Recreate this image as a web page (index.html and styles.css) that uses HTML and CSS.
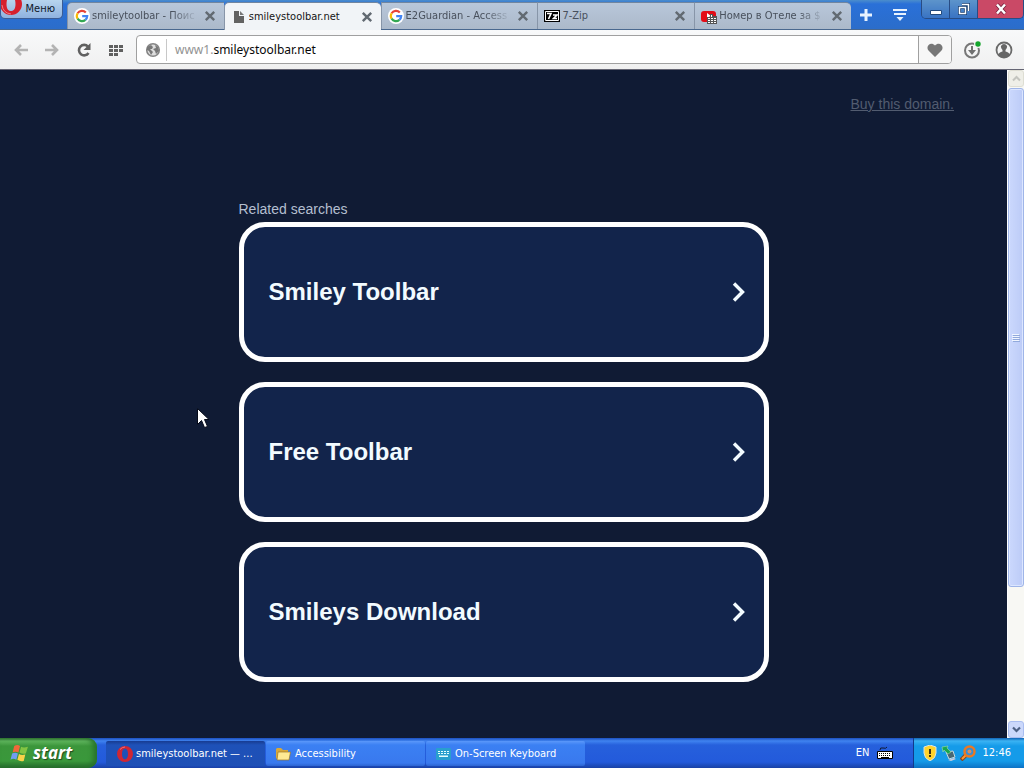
FILE: index.html
```html
<!DOCTYPE html>
<html lang="ru">
<head>
<meta charset="utf-8">
<meta name="viewport" content="width=device-width, initial-scale=1">
<title>smileystoolbar.net</title>
<link rel="stylesheet" href="styles.css">
</head>
<body>
<svg class="symbols" aria-hidden="true">
  <symbol id="google" viewBox="0 0 16 16"><circle cx="8" cy="8" r="8" fill="#fff"/><g fill="none" stroke-width="2.2"><path d="M11.8 4.4A5.2 5.2 0 0 0 3.6 5.3" stroke="#e84335"/><path d="M3.6 5.3a5.2 5.2 0 0 0 0 5.4" stroke="#f9bb04"/><path d="M3.6 10.7a5.2 5.2 0 0 0 7.8 1.2" stroke="#33a852"/><path d="M11.4 11.9a5.2 5.2 0 0 0 1.8-3.7H8.2" stroke="#4284f3"/></g></symbol>
  <symbol id="close" viewBox="0 0 10 10"><path d="M1.5 1.5l7 7M8.5 1.5l-7 7" stroke="#626a72" stroke-width="2"/></symbol>
  <symbol id="opera" viewBox="0 0 16 16"><path fill-rule="evenodd" fill="#cf2634" d="M8 0a8 8 0 1 0 0 16A8 8 0 0 0 8 0zm0 2.6c1.9 0 3 2.3 3 5.4s-1.100 5.400-3 5.400S5 11.100 5 8s1.100-5.400 3-5.400z"/><path d="M3 3.500Q5 1 8 1" fill="none" stroke="#ee7078"/></symbol>
  <symbol id="chevron" viewBox="0 0 14 20"><path d="M2 1.500L10.500 10 2 18.500" fill="none" stroke="#f2fbff" stroke-width="3.400"/></symbol>
</svg>

<header class="browser">
  <div class="tabstrip">
    <button class="menu"><svg class="menu-logo" viewBox="0 0 22 15"><path fill-rule="evenodd" fill="#d6202d" d="M10-7a11 11 0 1 0 0 22 11 11 0 0 0 0-22zm0 3c3 0 4.500 3.500 4.500 8s-1.500 7-4.500 7-4.500-2.500-4.500-7S7-4 10-4z"/><path d="M1 5q1 8 9 9" fill="none" stroke="#f08088"/></svg>Меню</button>
    <nav class="tabs">
      <div class="tab first"><svg class="fav"><use href="#google"/></svg><button class="tab-title fade">smileytoolbar - Поис</button><button class="close" aria-label="Закрыть"><svg><use href="#close"/></svg></button></div>
      <div class="tab active"><svg class="page-icon" viewBox="0 0 10 12"><path d="M0 0h5v5h5v7H0z" fill="#626262"/><path d="M6 0l4 4H6z" fill="#777"/></svg><button class="tab-title">smileystoolbar.net</button><button class="close" aria-label="Закрыть"><svg><use href="#close"/></svg></button></div>
      <div class="tab"><svg class="fav"><use href="#google"/></svg><button class="tab-title fade">E2Guardian - Access</button><button class="close" aria-label="Закрыть"><svg><use href="#close"/></svg></button></div>
      <div class="tab"><svg class="fav" viewBox="0 0 16 16"><path d="M0 2h16v12H0z"/><path d="M1.500 3.500h13v9h-13z" fill="#000" stroke="#fff"/><path d="M3 5.500h4L4.500 11M9 7h4l-3.500 3.500H13" fill="none" stroke="#fff" stroke-width="1.600"/></svg><button class="tab-title">7-Zip</button><button class="close" aria-label="Закрыть"><svg><use href="#close"/></svg></button></div>
      <div class="tab"><svg class="fav" viewBox="0 0 16 16"><rect y="3" width="15" height="11" rx="3" fill="#e40b16"/><path d="M6 5l4 3-4 2z" fill="#fff"/><path d="M6 9h3V6h3v2h4v8H6z" fill="#555"/><path d="M7 10h2v1H7zm0 2h2v1H7zm0 2h2v1H7zm3-7h1v2h-1zm0 3h2v1h-2zm0 2h2v1h-2zm0 2h2v1h-2zm3-4h2v1h-2zm0 2h2v1h-2zm0 2h2v1h-2z" fill="#fff"/></svg><button class="tab-title fade">Номер в Отеле за $</button><button class="close" aria-label="Закрыть"><svg><use href="#close"/></svg></button></div>
    </nav>
    <button class="strip-icon" aria-label="Новая вкладка"><svg viewBox="0 0 12 12"><path d="M6 0v12M0 6h12" stroke="#e8f3ff" stroke-width="3"/></svg></button>
    <button class="strip-icon wide" aria-label="Вкладки"><svg viewBox="0 0 14 12"><path d="M0 1h14M1 5h12" stroke="#e8f3ff" stroke-width="2"/><path d="M3.500 8h7L7 12z" fill="#e8f3ff"/></svg></button>
    <div class="window-controls">
      <button aria-label="Свернуть"><svg viewBox="0 0 12 12"><path d="M.5 7.500h11v4H.5z" fill="#fff" stroke="#234a7c"/></svg></button>
      <button aria-label="Развернуть"><svg viewBox="0 0 12 12"><path d="M4 1.500h6.500V8M1.500 4.500h6v6h-6z" fill="none" stroke="#163c70" stroke-width="3"/><path d="M4 1.500h6.500V8M1.500 4.500h6v6h-6z" fill="none" stroke="#fff" stroke-width="1.500"/></svg></button>
      <button class="window-close" aria-label="Закрыть окно"><svg viewBox="0 0 12 12"><path d="M2 1.500l8 9M10 1.500l-8 9" stroke="#70203b" stroke-width="4"/><path d="M2 1.500l8 9M10 1.500l-8 9" stroke="#fff" stroke-width="2.500"/></svg></button>
    </div>
  </div>
  <div class="toolbar">
    <div class="nav-buttons">
      <button aria-label="Назад"><svg viewBox="0 0 16 16"><path d="M15 8H3M8 3L3 8l5 5" fill="none" stroke="#b3b3b3" stroke-width="2.600"/></svg></button>
      <button aria-label="Вперёд"><svg viewBox="0 0 16 16"><path d="M1 8h12M8 3l5 5-5 5" fill="none" stroke="#b3b3b3" stroke-width="2.600"/></svg></button>
      <button aria-label="Обновить"><svg viewBox="0 0 16 16"><path d="M12.500 11A5.200 5.200 0 1 1 12 4.600" fill="none" stroke="#606060" stroke-width="2.600"/><path d="M14.500 1v7h-7z" fill="#606060"/></svg></button>
      <button aria-label="Экспресс-панель"><svg viewBox="0 0 16 16"><path d="M1 3h4v3H1zm5 0h4v3H6zm5 0h4v3h-4zM1 7h4v3H1zm5 0h4v3H6zm5 0h4v3h-4zM1 11h4v3H1zm5 0h4v3H6z" fill="#606060"/></svg></button>
    </div>
    <div class="address">
      <svg class="globe" viewBox="0 0 16 16"><circle cx="8" cy="8" r="6.300" fill="#ddd" stroke="#858585" stroke-width="1.600"/><path d="M2 5l4-2 2 2-1 2H5l3 3-2 3-2-4-2-1zM10 3l3 2 1 4-3 3-1-3-2-2 3-1z" fill="#777"/></svg>
      <div class="url"><input aria-label="Адрес" value="www1.smileystoolbar.net"><div class="url-display" aria-hidden="true"><span>www1.</span>smileystoolbar.net</div></div>
      <button class="heart" aria-label="Добавить в закладки"><svg viewBox="0 0 16 16"><path d="M8 15L1.500 8.500C-2 4 4-1 8 3.500 12-1 18 4 14.500 8.500z" fill="#777"/></svg></button>
    </div>
    <button class="tool" aria-label="Загрузки"><svg viewBox="0 0 18 18"><circle cx="9" cy="9.500" r="7" fill="none" stroke="#777" stroke-width="2"/><path d="M8 5h2v4h3l-4 5-4-5h3z" fill="#707070"/><circle cx="15" cy="3" r="4" fill="#f3f3f3"/><circle cx="15" cy="3" r="2.700" fill="#13a52c"/></svg></button>
    <button class="tool" aria-label="Профиль"><svg viewBox="0 0 18 18"><circle cx="9" cy="9" r="7.500" fill="none" stroke="#6a6a6a" stroke-width="1.800"/><path d="M3 14q1-3 4.500-3.500V9Q5.500 7 6 5q1-2 3-2t3 2q.5 2-1.500 4v1.500Q14 11 15 14q-6 6-12 0z" fill="#666"/></svg></button>
  </div>
</header>

<div class="viewport">
  <main class="page">
    <a class="buy" href="#">Buy this domain.</a>
    <section class="results">
      <h1>Related searches</h1>
      <a class="card" href="#">Smiley Toolbar<svg><use href="#chevron"/></svg></a>
      <a class="card" href="#">Free Toolbar<svg><use href="#chevron"/></svg></a>
      <a class="card" href="#">Smileys Download<svg><use href="#chevron"/></svg></a>
    </section>
  </main>
  <div class="scrollbar">
    <button class="scroll-button disabled" aria-label="Вверх"><svg viewBox="0 0 9 9"><path d="M1 6.500L4.500 3 8 6.500" fill="none" stroke="#c4c5bf" stroke-width="2"/></svg></button>
    <div class="track"><div class="thumb"><svg viewBox="0 0 8 8"><path d="M0 .5h7M0 2.500h7M0 4.500h7M0 6.500h7" stroke="#f0f5ff"/><path d="M1 1.500h7M1 3.500h7M1 5.500h7M1 7.500h7" stroke="#91a9dc"/></svg></div></div>
    <button class="scroll-button" aria-label="Вниз"><svg viewBox="0 0 9 9"><path d="M1 2.500L4.500 6 8 2.500" fill="none" stroke="#4d6185" stroke-width="2.200"/></svg></button>
  </div>
</div>

<footer class="taskbar">
  <button class="start"><svg viewBox="0 0 18 18"><path d="M4 2q3-2 5.500 0L8 8Q5 6.500 2.500 8z" fill="#f0683a"/><path d="M10.500 2.500Q13 4 17 2.500L15 9q-3 1-6-1z" fill="#83c443"/><path d="M2 9q3-1.500 5.500 0L6 15q-3-2-5.500 0z" fill="#709df2"/><path d="M8.500 9.500Q11 11 14.500 10L13 16q-3 1-6-1z" fill="#fad249"/></svg>start</button>
  <nav class="tasks">
    <button class="task current"><svg><use href="#opera"/></svg>smileystoolbar.net — ...</button>
    <button class="task"><svg viewBox="0 0 16 16"><path d="M1 3l1-1h4l2 2h5v9H2L1 12z" fill="#d7a83a"/><path d="M3 6h12.500L14 14H2z" fill="#ffe993" stroke="#9b7627" stroke-width=".7"/></svg>Accessibility</button>
    <button class="task"><svg viewBox="0 0 16 16"><rect x="1" y="2" width="15" height="12" rx="1" fill="#299fce"/><path d="M3 5h2v1H3zm3 0h2v1H6zm3 0h2v1H9zm3 0h2v1h-2zM3 7h2v1H3zm3 0h2v1H6zm3 0h2v1H9zm3 0h2v1h-2zM4 9.500h9v1.500H4z" fill="#e5ffff"/></svg>On-Screen Keyboard</button>
  </nav>
  <div class="language">EN<svg viewBox="0 0 16 16"><path d="M3 5q0-3 3-2t4-1" fill="none" stroke="#101a35"/><path d="M.5 6.500h15v7H.5z" fill="#fff" stroke="#000"/><path d="M2 8.500h12M2 10.500h12" stroke="#000" stroke-dasharray="1 1"/><path d="M4 12.500h8" stroke="#000"/></svg></div>
  <div class="tray">
    <svg viewBox="0 0 16 16"><path d="M8 0l6 2v6q0 5-6 8-6-3-6-8V2z" fill="#ffd42b" stroke="#d9e3e6"/><path d="M7 4h2v5H7zm0 6h2v2H7z" fill="#3d3213"/></svg>
    <svg viewBox="0 0 16 16"><path d="M5 7l7-1 2 6-6 2z" fill="#476875" stroke="#c4d9df"/><path d="M7 15l6-2 2 1-5 2z" fill="#ccd"/><path d="M1 2l6-1-1 2 4 4-3 2-4-4-1 2z" fill="#18a650" stroke="#b6e8b6" stroke-width=".5"/></svg>
    <svg viewBox="0 0 16 16"><path d="M6 10l-5 5" stroke="#8b471c" stroke-width="4"/><path d="M6 10l-4 4" stroke="#ff9632" stroke-width="2"/><circle cx="9.500" cy="6.500" r="5" fill="#358ed5" stroke="#e97924" stroke-width="2.500"/><circle cx="9.500" cy="6.500" r="2" fill="#d78e60"/></svg>
    <time>12:46</time>
  </div>
</footer>
<svg class="cursor" viewBox="0 0 12 21" aria-hidden="true"><path d="M.5.5v16l4-4 3 7 3-1-3-7h4.500z" fill="#fff" stroke="#050a18"/></svg>
</body>
</html>
```
FILE: styles.css
```css
* { box-sizing: border-box; }
body {
  margin: 0;
  height: 100vh;
  display: flex;
  flex-direction: column;
  overflow: hidden;
  background: #101b34;
  font: 11px/14px "DejaVu Sans Condensed", Tahoma, sans-serif;
}
button { font: inherit; color: inherit; border: 0; padding: 0; background: none; }
svg { display: block; flex: none; }
.symbols { position: absolute; width: 0; height: 0; }

/* Browser frame */
.browser { flex: none; }
.tabstrip {
  height: 30px;
  display: flex;
  background: linear-gradient(#4b8dcc, #2a70d8 4px, #2b6dca);
  border-bottom: 1px solid #49688f;
}
.menu {
  width: 63px;
  height: 19px;
  margin-right: 4px;
  padding-right: 7px;
  flex: none;
  display: flex;
  align-items: center;
  justify-content: space-between;
  background: linear-gradient(#b7d5ee, #8fb2df);
  border: 1px solid #3c5c93;
  border-top: 0;
  border-radius: 0 0 5px 5px;
  color: #10192b;
}
.menu-logo { width: 22px; height: 15px; align-self: flex-start; }
.tabs { flex: 0 1 784px; display: grid; grid-template-columns: repeat(5, minmax(0, 1fr)); min-width: 0; padding-top: 2px; }
.tab {
  display: flex;
  align-items: center;
  gap: 2px;
  padding: 0 8px 0 6px;
  background: linear-gradient(#b8c7da, #abb9ca);
  border-left: 1px solid #8795a8;
  border-top: 1px solid #71869f;
  color: #48505c;
}
.tab.first { border-radius: 5px 0 0 0; }
.tab:last-child { border-radius: 0 5px 0 0; }
.tab.active {
  background: #f1f4f7;
  color: #151515;
  border-radius: 5px 5px 0 0;
  margin-bottom: -1px;
  padding-left: 9px;
  gap: 5px;
}
.fav { width: 16px; height: 16px; }
.page-icon { width: 10px; height: 12px; }
.tab-title { flex: 1; min-width: 0; overflow: hidden; white-space: nowrap; text-align: left; }
.fade { -webkit-mask-image: linear-gradient(90deg, #000 75%, transparent 100%); mask-image: linear-gradient(90deg, #000 75%, transparent 100%); }
.close { margin-left: 4px; }
.close svg { width: 12px; height: 12px; }
.strip-icon { width: 30px; display: grid; place-items: center; }
.strip-icon.wide { width: 38px; }
.strip-icon svg { width: 12px; height: 12px; }
.strip-icon.wide svg { width: 14px; }
.window-controls { height: 19px; margin-left: auto; display: flex; border: 1px solid #284c84; border-top: 0; border-radius: 0 0 5px 5px; overflow: hidden; }
.window-controls button { width: 28px; display: grid; place-items: center; background: linear-gradient(#5d94cb, #3973c3); border-right: 1px solid #284c84; }
.window-controls svg { width: 12px; height: 12px; }
.window-controls .window-close { width: 45px; background: #ca4966; border: 0; }
.toolbar {
  height: 40px;
  display: flex;
  align-items: center;
  padding: 0 4px 0 6px;
  background: linear-gradient(#f8f9fa, #f0f0f0);
  border-bottom: 1px solid #656573;
}
.nav-buttons { display: flex; padding-right: 4px; }
.nav-buttons button { width: 32px; height: 28px; display: grid; place-items: center; }
.nav-buttons button:first-child { width: 30px; }
.nav-buttons svg { width: 16px; height: 16px; }
.address { flex: 1; height: 29px; display: flex; align-items: center; background: #fff; border: 1px solid #a0a0a0; border-radius: 4px; margin-right: 4px; overflow: hidden; }
.globe { width: 16px; height: 16px; margin: 0 5px 0 8px; }
.url { flex: 1; display: grid; align-items: center; border-left: 1px solid #c8c8c8; padding-left: 8px; height: 22px; font: 12px/16px "Noto Sans", Tahoma, sans-serif; }
.url input, .url-display { grid-area: 1 / 1; }
.url input { width: 100%; border: 0; padding: 0; outline: 0; font: inherit; color: transparent; background: transparent; }
.url-display { pointer-events: none; color: #080808; }
.url-display span { color: #929292; }
.heart { width: 33px; height: 29px; display: grid; place-items: center; border-left: 1px solid #a0a0a0; background: #f7f7f7; }
.heart svg { width: 16px; height: 16px; }
.tool { width: 32px; display: grid; place-items: center; }
.tool svg { width: 18px; height: 18px; }

/* Page */
.viewport { flex: 1; min-height: 0; display: flex; }
.page { flex: 1; min-width: 0; overflow: hidden; font: 14px/16px "Liberation Sans", Arial, sans-serif; background: #101b34; }
.buy { display: block; width: fit-content; margin: 26px 53px 89px auto; color: #525c70; }
.results { width: 530px; max-width: 90%; margin: 0 auto; display: flex; flex-direction: column; gap: 20px; }
.results h1 { margin: 0 0 -15px; font: inherit; color: #b4bfd0; }
.card {
  min-height: 140px;
  display: flex;
  align-items: center;
  justify-content: space-between;
  padding: 0 18px 0 25px;
  border: 5px solid #fff;
  border-radius: 26px;
  background: #12244b;
  color: #f2fbff;
  font-size: 24px;
  line-height: 28px;
  font-weight: bold;
  text-decoration: none;
}
.card svg { width: 14px; height: 20px; }
.scrollbar { width: 17px; display: flex; flex-direction: column; background: #f8f8f4; border-left: 1px solid #fff; }
.scroll-button { height: 17px; display: grid; place-items: center; border: 1px solid #a9bdf0; border-radius: 3px; background: #cbd8fb; }
.scroll-button.disabled { border-color: #deded3; background: #efefe8; }
.scroll-button svg { width: 9px; height: 9px; }
.track { flex: 1; padding: 1px 0; }
.thumb { height: 79%; display: grid; place-items: center; border: 1px solid #9fb5e8; border-radius: 3px; background: linear-gradient(90deg, #cbd8fd, #bccbf7); box-shadow: inset 0 0 0 1px #dce6ff; }
.thumb svg { width: 8px; height: 8px; }

/* Taskbar */
.taskbar { flex: none; height: 30px; display: flex; color: #fff; background: linear-gradient(#1c4fbe, #3f83f0 3px, #2660dc 7px, #235adb 24px, #1941a5); }
.start {
  width: 97px;
  display: flex;
  align-items: center;
  gap: 4px;
  padding-left: 10px;
  border-radius: 0 9px 9px 0;
  background: linear-gradient(#347334, #60b65e 3px, #3b963b 8px, #3a983b 23px, #24682b);
  box-shadow: inset -4px 0 5px #28742c;
  font: italic bold 17px/22px "Open Sans", sans-serif;
  text-shadow: 1px 1px 1px #20491f;
}
.start svg { width: 19px; height: 19px; }
.tasks { flex: 1; min-width: 0; display: flex; padding: 3px 0 2px 9px; gap: 1px; }
.task { flex: 0 1 159px; min-width: 0; display: flex; align-items: center; gap: 4px; padding-left: 9px; white-space: nowrap; overflow: hidden; border-radius: 2px; background: linear-gradient(#5b98fa, #3b80f3 4px, #3979ee 22px, #2c64d1); }
.task.current { padding-left: 11px; gap: 3px; background: linear-gradient(#173b91, #1e51b8 4px, #1e50b6); }
.task svg { width: 16px; height: 16px; }
.language { display: flex; align-items: center; gap: 8px; padding-right: 20px; }
.language svg { width: 16px; height: 16px; }
.tray { display: flex; align-items: center; gap: 3px; padding: 0 13px 0 8px; border-left: 1px solid #123a8a; background: linear-gradient(#1063b6, #3bb3f3 3px, #159be9 8px, #159be9 23px, #0d72c5); }
.tray svg { width: 16px; height: 16px; }
.tray time { margin-left: 3px; }

.cursor { position: absolute; left: 197px; top: 408px; width: 12px; height: 21px; pointer-events: none; }
```
